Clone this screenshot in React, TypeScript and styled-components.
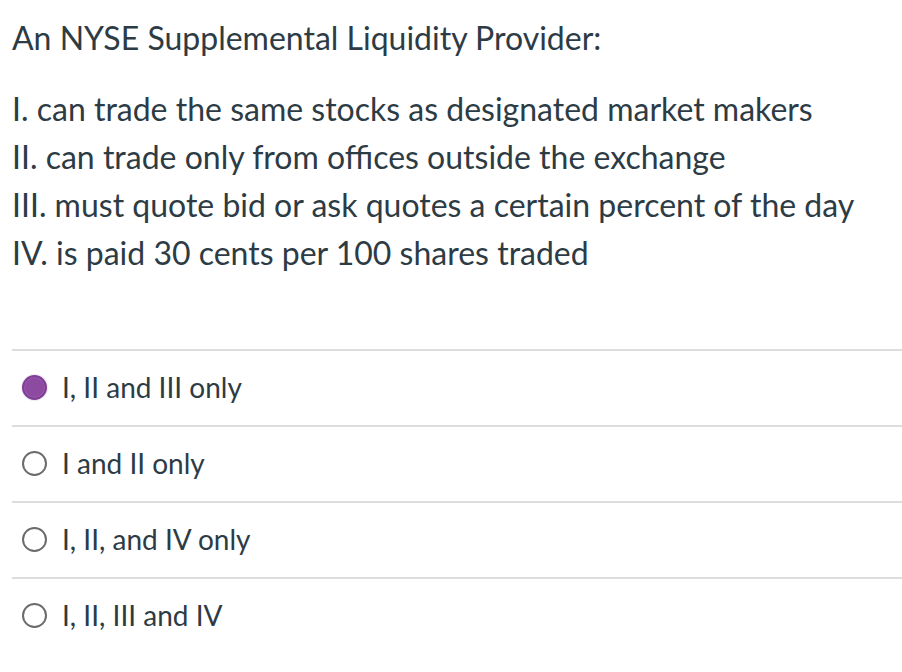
import React from "react";
import styled, { createGlobalStyle } from "styled-components";

const Global = createGlobalStyle`
  html, body { margin: 0; padding: 0; background: #ffffff; }
  body { font-family: Lato, "Liberation Sans", sans-serif; color: #2d3b45; }
`;

const Page = styled.div`
  width: 902px;
  padding: 14px 0 0 12px;
  box-sizing: border-box;
`;

const Question = styled.div`
  font-size: 32px;
  line-height: 48px;
`;

const Title = styled.p`
  margin: 0 0 23px 0;
`;

const Statements = styled.div`
  display: flex;
  flex-direction: column;
`;

const Answers = styled.div`
  margin-top: 72px;
  display: flex;
  flex-direction: column;
`;

const Row = styled.label`
  display: flex;
  align-items: center;
  gap: 15px;
  height: 72px;
  box-sizing: content-box;
  border-top: 2px solid #dddddd;
  padding: 0 0 2px 10px;
  font-size: 28px;
  color: #2d3b45;
`;

const Label = styled.span``;

const Radio = styled.span<{ $checked?: boolean }>`
  width: 25px;
  height: 25px;
  border-radius: 50%;
  box-sizing: border-box;
  flex: none;
  border: ${(p) => (p.$checked ? "2px solid #7f3f94" : "2px solid #6b6b6b")};
  background: ${(p) => (p.$checked ? "#8c4ba0" : "#ffffff")};
  box-shadow: ${(p) => (p.$checked ? "inset 0 0 0 1px #9a5aad, 0 0 0 1px #f3e8f6" : "none")};
`;

const answers = [
  { text: "I, II and III only", checked: true },
  { text: "I and II only", checked: false },
  { text: "I, II, and IV only", checked: false },
  { text: "I, II, III and IV", checked: false },
];

export default function App() {
  return (
    <Page>
      <Global />
      <Question>
        <Title>An NYSE Supplemental Liquidity Provider:</Title>
        <Statements>
          <div>I. can trade the same stocks as designated market makers</div>
          <div>II. can trade only from offices outside the exchange</div>
          <div>III. must quote bid or ask quotes a certain percent of the day</div>
          <div>IV. is paid 30 cents per 100 shares traded</div>
        </Statements>
      </Question>
      <Answers>
        {answers.map((a) => (
          <Row key={a.text}>
            <Radio $checked={a.checked} />
            <Label>{a.text}</Label>
          </Row>
        ))}
      </Answers>
    </Page>
  );
}
